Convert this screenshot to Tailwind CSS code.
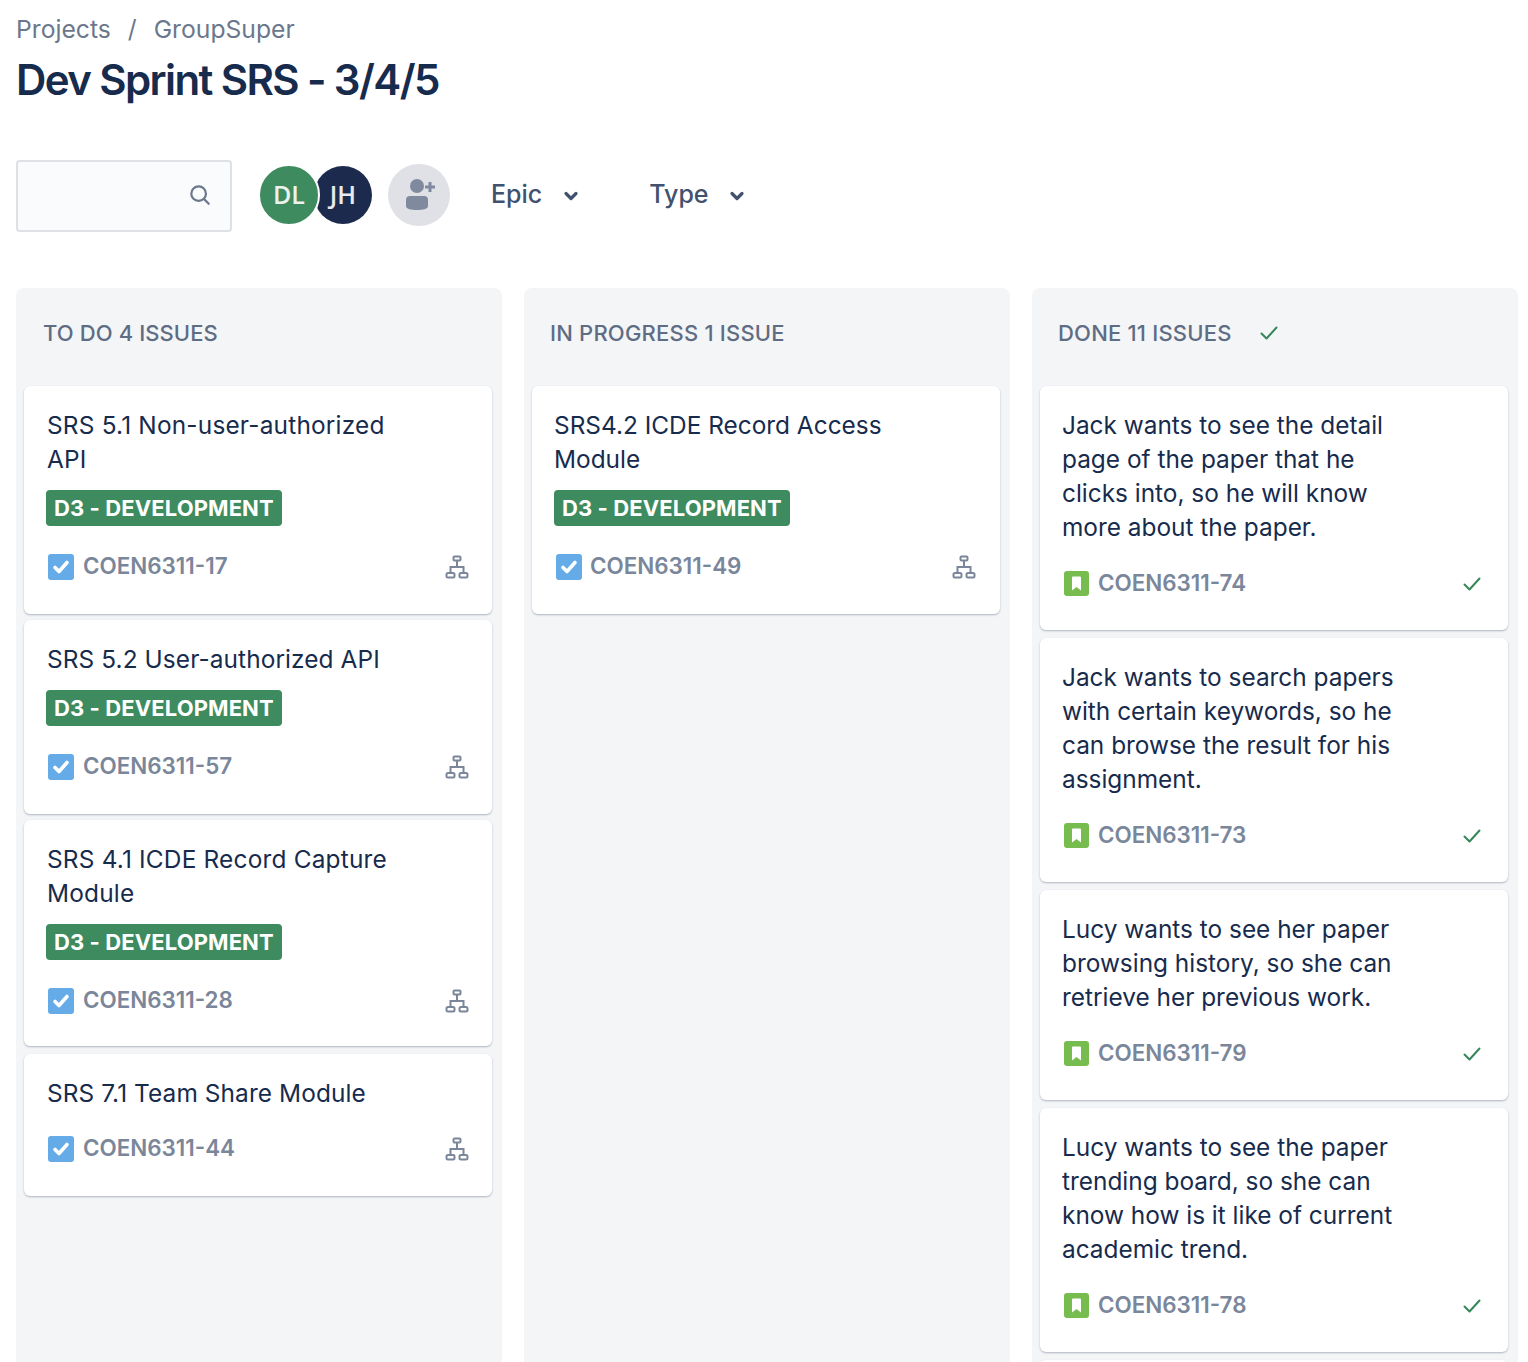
<!DOCTYPE html>
<html lang="en">
<head>
    <meta charset="UTF-8">
    <meta name="viewport" content="width=device-width, initial-scale=1.0">
    <title>Dev Sprint SRS - 3/4/5</title>
    <script src="https://cdn.jsdelivr.net/npm/@tailwindcss/browser@4"></script>
</head>
<body class="bg-white font-['Inter',sans-serif]">
    <svg class="hidden">
        <symbol id="task" viewBox="0 0 26 26">
            <rect width="26" height="26" rx="3" fill="#65ABE8"/>
            <path d="M7 13.500l4 4 8-9" fill="none" stroke="#fff" stroke-width="3.600" stroke-linecap="round" stroke-linejoin="round"/>
        </symbol>
        <symbol id="story" viewBox="0 0 25 25">
            <rect width="25" height="25" rx="3" fill="#76BC4E"/>
            <path d="M8 6.500a1 1 0 0 1 1-1h7a1 1 0 0 1 1 1v13l-4.500-3.500L8 19.500z" fill="#fff"/>
        </symbol>
        <symbol id="tree" viewBox="0 0 24 24" fill="none" stroke="#7A869A" stroke-width="2">
            <rect x="8.500" y="1.500" width="7" height="4" rx="1"/>
            <rect x="1.500" y="18" width="8" height="4.500" rx="1.500"/>
            <rect x="14.500" y="18" width="8" height="4.500" rx="1.500"/>
            <path d="M12 5.500V12M5.500 18v-6h13v6"/>
        </symbol>
        <symbol id="done" viewBox="0 0 18 14" fill="none" stroke="#36865A" stroke-width="2" stroke-linecap="round" stroke-linejoin="round">
            <path d="M1.500 7.500l5 5 10-11"/>
        </symbol>
    </svg>

    <div class="h-[1362px] overflow-hidden pl-4 pr-[10px]">
        <div class="flex items-center h-[28px] mt-[16px] text-[24.7px] text-[#6B778C]">
            <span>Projects</span>
            <span class="ml-[17px] mr-[17px]">/</span>
            <span>GroupSuper</span>
        </div>

        <h1 class="mt-[7px] h-[58px] leading-[58px] text-[42px] font-semibold tracking-[-1.6px] text-[#172B4D]">Dev Sprint SRS - 3/4/5</h1>

        <!-- filters -->
        <div class="flex items-center h-[72px] mt-[51px]">
            <div class="flex items-center justify-end w-[216px] h-[72px] pr-[19px] rounded border-2 border-[#DFE1E6] bg-[#FAFBFC]">
                <svg class="w-[22px] h-[22px] mb-[2px]" viewBox="0 0 24 24" fill="none" stroke="#6B778C" stroke-width="2.400" stroke-linecap="round">
                    <circle cx="10.500" cy="10.500" r="8"/>
                    <path d="M16.500 16.500l5 5"/>
                </svg>
            </div>
            <div class="flex items-center ml-[26px] mb-[2px]">
                <div class="z-10 flex items-center justify-center w-[62px] h-[62px] rounded-full border-2 border-white bg-[#3D8B5F] font-['Open_Sans',sans-serif] text-[25px] font-semibold text-white/90">DL</div>
                <div class="ml-[-6px] flex items-center justify-center w-[58px] h-[58px] rounded-full bg-[#1C2B4D] font-['Open_Sans',sans-serif] text-[25px] font-semibold text-white/90">JH</div>
            </div>
            <div class="flex items-center justify-center ml-[16px] mb-[2px] w-[62px] h-[62px] rounded-full bg-[#DFE1E6]">
                <svg class="w-[34px] h-[34px]" viewBox="-1 0 34 34" fill="#7F8A9E">
                    <circle cx="14" cy="8" r="7"/>
                    <path d="M3 22a4 4 0 0 1 4-4h14a4 4 0 0 1 4 4v6c0 3-5 4-11 4S3 31 3 28z"/>
                    <path d="M25.500 4h3v3.500H32v3h-3.500V14h-3v-3.500H22v-3h3.500z"/>
                </svg>
            </div>
            <div class="ml-[41px] mb-[3px] flex items-center text-[25px] font-medium text-[#42526E]">
                <span>Epic</span>
                <svg class="ml-[21px] w-[16px] h-[12px] mt-[3px]" viewBox="0 0 16 12" fill="none" stroke="#42526E" stroke-width="3.200" stroke-linecap="round" stroke-linejoin="round"><path d="M3 3.500l5 5 5-5"/></svg>
            </div>
            <div class="ml-[70px] mb-[3px] flex items-center text-[25px] font-medium text-[#42526E]">
                <span>Type</span>
                <svg class="ml-[20px] w-[16px] h-[12px] mt-[3px]" viewBox="0 0 16 12" fill="none" stroke="#42526E" stroke-width="3.200" stroke-linecap="round" stroke-linejoin="round"><path d="M3 3.500l5 5 5-5"/></svg>
            </div>
        </div>

        <!-- board -->
        <div class="flex gap-[22px] mt-[56px] h-[1074px] text-[24.4px] leading-[34px] text-[#172B4D]">
            <section class="w-[486px] h-full rounded-t-lg bg-[#F4F5F7] pl-2 pr-[10px]">
                <div class="flex items-center h-[90px] pl-[19px] text-[22px] font-medium tracking-[0.1px] text-[#5E6C84]">TO DO 4 ISSUES</div>
                <div class="mt-2 flex flex-col">
                    <article class="h-[228px] rounded-md bg-white pt-[22px] pl-[23px] pr-[24px] shadow-[0_1px_2px_rgba(9,30,66,0.3)]">
                        <p class="w-[370px] tracking-[0.2px]">SRS 5.1 Non-user-authorized API</p>
                        <div class="ml-[-1px] mt-[14px] inline-flex items-center h-[36px] px-2 rounded bg-[#3D8B5F] text-[22px] font-bold tracking-[0.1px] text-white">D3 - DEVELOPMENT</div>
                        <div class="flex items-center justify-between h-[26px] mt-[28px]">
                            <div class="flex items-center ml-px gap-[9px]"><svg class="w-[26px] h-[26px]"><use href="#task"/></svg><span class="mb-[2px] text-[22.4px] font-semibold text-[#7A869A]">COEN6311-17</span></div>
                            <svg class="w-[24px] h-[24px] mr-[-1px]"><use href="#tree"/></svg>
                        </div>
                    </article>
                    <article class="mt-[6px] h-[194px] rounded-md bg-white pt-[22px] pl-[23px] pr-[24px] shadow-[0_1px_2px_rgba(9,30,66,0.3)]">
                        <p class="w-[370px] tracking-[0.1px]">SRS 5.2 User-authorized API</p>
                        <div class="ml-[-1px] mt-[14px] inline-flex items-center h-[36px] px-2 rounded bg-[#3D8B5F] text-[22px] font-bold tracking-[0.1px] text-white">D3 - DEVELOPMENT</div>
                        <div class="flex items-center justify-between h-[26px] mt-[28px]">
                            <div class="flex items-center ml-px gap-[9px]"><svg class="w-[26px] h-[26px]"><use href="#task"/></svg><span class="mb-[2px] text-[22.4px] font-semibold text-[#7A869A]">COEN6311-57</span></div>
                            <svg class="w-[24px] h-[24px] mr-[-1px]"><use href="#tree"/></svg>
                        </div>
                    </article>
                    <article class="mt-[6px] h-[226px] rounded-md bg-white pt-[22px] pl-[23px] pr-[24px] shadow-[0_1px_2px_rgba(9,30,66,0.3)]">
                        <p class="w-[370px] tracking-[0.2px]">SRS 4.1 ICDE Record Capture Module</p>
                        <div class="ml-[-1px] mt-[14px] inline-flex items-center h-[36px] px-2 rounded bg-[#3D8B5F] text-[22px] font-bold tracking-[0.1px] text-white">D3 - DEVELOPMENT</div>
                        <div class="flex items-center justify-between h-[26px] mt-[28px]">
                            <div class="flex items-center ml-px gap-[9px]"><svg class="w-[26px] h-[26px]"><use href="#task"/></svg><span class="mb-[2px] text-[22.4px] font-semibold text-[#7A869A]">COEN6311-28</span></div>
                            <svg class="w-[24px] h-[24px] mr-[-1px]"><use href="#tree"/></svg>
                        </div>
                    </article>
                    <article class="mt-2 h-[142px] rounded-md bg-white pt-[22px] pl-[23px] pr-[24px] shadow-[0_1px_2px_rgba(9,30,66,0.3)]">
                        <p class="w-[370px] tracking-[0.1px]">SRS 7.1 Team Share Module</p>
                        <div class="flex items-center justify-between h-[26px] mt-[26px]">
                            <div class="flex items-center ml-px gap-[9px]"><svg class="w-[26px] h-[26px]"><use href="#task"/></svg><span class="mb-[2px] text-[22.4px] font-semibold text-[#7A869A]">COEN6311-44</span></div>
                            <svg class="w-[24px] h-[24px] mr-[-1px]"><use href="#tree"/></svg>
                        </div>
                    </article>
                </div>
            </section>

            <section class="w-[486px] h-full rounded-t-lg bg-[#F4F5F7] pl-2 pr-[10px]">
                <div class="flex items-center h-[90px] pl-[18px] text-[22px] font-medium tracking-[0.2px] text-[#5E6C84]">IN PROGRESS 1 ISSUE</div>
                <div class="mt-2 flex flex-col">
                    <article class="h-[228px] rounded-md bg-white pt-[22px] pl-[22px] pr-[24px] shadow-[0_1px_2px_rgba(9,30,66,0.3)]">
                        <p class="w-[370px]">SRS4.2 ICDE Record Access Module</p>
                        <div class="mt-[14px] inline-flex items-center h-[36px] px-2 rounded bg-[#3D8B5F] text-[22px] font-bold tracking-[0.1px] text-white">D3 - DEVELOPMENT</div>
                        <div class="flex items-center justify-between h-[26px] mt-[28px]">
                            <div class="flex items-center ml-[2px] gap-[8px]"><svg class="w-[26px] h-[26px]"><use href="#task"/></svg><span class="mb-[2px] text-[22.4px] font-semibold text-[#7A869A]">COEN6311-49</span></div>
                            <svg class="w-[24px] h-[24px]"><use href="#tree"/></svg>
                        </div>
                    </article>
                </div>
            </section>

            <section class="w-[486px] h-full rounded-t-lg bg-[#F4F5F7] pl-2 pr-[10px]">
                <div class="flex items-center h-[90px] pl-[18px] text-[22px] font-medium tracking-[0.2px] text-[#5E6C84]">
                    <span>DONE 11 ISSUES</span>
                    <svg class="ml-[28px] w-[18px] h-[14px]"><use href="#done"/></svg>
                </div>
                <div class="mt-2 flex flex-col gap-2">
                    <article class="shrink-0 h-[244px] rounded-md bg-white pt-[22px] pl-[22px] pr-[27px] shadow-[0_1px_2px_rgba(9,30,66,0.3)]">
                        <p class="w-[340px]">Jack wants to see the detail page of the paper that he clicks into, so he will know more about the paper.</p>
                        <div class="flex items-center justify-between h-[25px] mt-[27px]">
                            <div class="flex items-center ml-[2px] gap-[9px]"><svg class="w-[25px] h-[25px]"><use href="#story"/></svg><span class="mb-[2px] text-[22.4px] font-semibold text-[#7A869A]">COEN6311-74</span></div>
                            <svg class="w-[18px] h-[14px]"><use href="#done"/></svg>
                        </div>
                    </article>
                    <article class="shrink-0 h-[244px] rounded-md bg-white pt-[22px] pl-[22px] pr-[27px] shadow-[0_1px_2px_rgba(9,30,66,0.3)]">
                        <p class="w-[340px]">Jack wants to search papers with certain keywords, so he can browse the result for his assignment.</p>
                        <div class="flex items-center justify-between h-[25px] mt-[27px]">
                            <div class="flex items-center ml-[2px] gap-[9px]"><svg class="w-[25px] h-[25px]"><use href="#story"/></svg><span class="mb-[2px] text-[22.4px] font-semibold text-[#7A869A]">COEN6311-73</span></div>
                            <svg class="w-[18px] h-[14px]"><use href="#done"/></svg>
                        </div>
                    </article>
                    <article class="shrink-0 h-[210px] rounded-md bg-white pt-[22px] pl-[22px] pr-[27px] shadow-[0_1px_2px_rgba(9,30,66,0.3)]">
                        <p class="w-[340px]">Lucy wants to see her paper browsing history, so she can retrieve her previous work.</p>
                        <div class="flex items-center justify-between h-[25px] mt-[27px]">
                            <div class="flex items-center ml-[2px] gap-[9px]"><svg class="w-[25px] h-[25px]"><use href="#story"/></svg><span class="mb-[2px] text-[22.4px] font-semibold text-[#7A869A]">COEN6311-79</span></div>
                            <svg class="w-[18px] h-[14px]"><use href="#done"/></svg>
                        </div>
                    </article>
                    <article class="shrink-0 h-[244px] rounded-md bg-white pt-[22px] pl-[22px] pr-[27px] shadow-[0_1px_2px_rgba(9,30,66,0.3)]">
                        <p class="w-[340px]">Lucy wants to see the paper trending board, so she can know how is it like of current academic trend.</p>
                        <div class="flex items-center justify-between h-[25px] mt-[27px]">
                            <div class="flex items-center ml-[2px] gap-[9px]"><svg class="w-[25px] h-[25px]"><use href="#story"/></svg><span class="mb-[2px] text-[22.4px] font-semibold text-[#7A869A]">COEN6311-78</span></div>
                            <svg class="w-[18px] h-[14px]"><use href="#done"/></svg>
                        </div>
                    </article>
                    <article class="shrink-0 h-[100px] rounded-md bg-white shadow-[0_1px_2px_rgba(9,30,66,0.3)]"></article>
                </div>
            </section>
        </div>
    </div>
</body>
</html>
